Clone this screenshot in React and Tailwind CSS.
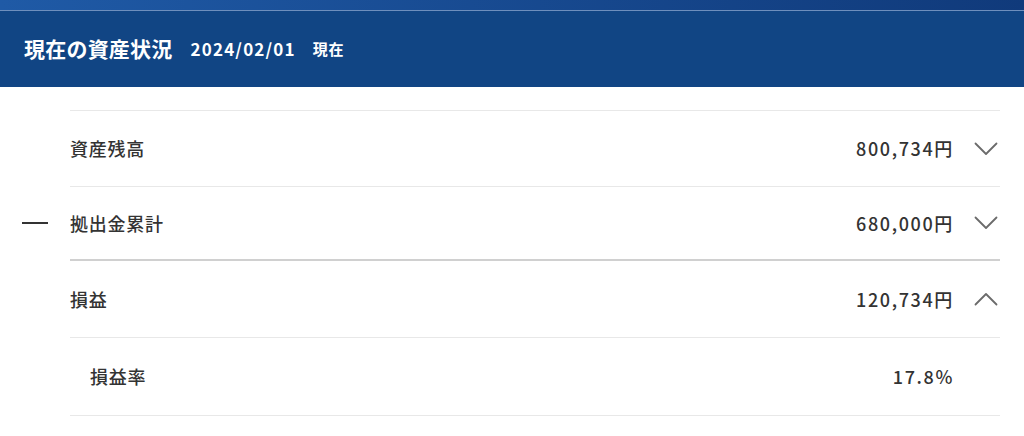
import React from 'react';

const font = { fontFamily: '"Noto Sans CJK JP", "Noto Sans", sans-serif' };

function Chevron({ up }) {
  return (
    <svg width="24" height="14" viewBox="0 0 24 14" fill="none" className="shrink-0">
      <path
        d={up ? 'M1.5 12.5 L12 2 L22.5 12.5' : 'M1.5 1.5 L12 12 L22.5 1.5'}
        stroke="#6b6b6b"
        strokeWidth="1.8"
        strokeLinecap="round"
        strokeLinejoin="round"
      />
    </svg>
  );
}

function Row({ label, value, chevron, indent, dash, height, border }) {
  return (
    <div className="flex">
      {/* left gutter */}
      <div className="w-[70px] shrink-0 flex items-center">
        {dash && <div className="ml-[22px] w-[26px] h-[2px] bg-[#333]" />}
      </div>
      <div className={`flex-1 flex items-center ${height} ${border}`}>
        <span className={`text-[18px] font-medium text-[#333] tracking-[0.04em] ${indent ? 'pl-[20px]' : ''}`}>{label}</span>
        <span className="ml-auto text-[18px] font-medium text-[#333] tracking-[0.09em] -mr-[2px]">{value}</span>
        <div className="w-[24px] ml-[22px] mr-[2px] flex justify-center">
          {chevron && <Chevron up={chevron === 'up'} />}
        </div>
      </div>
    </div>
  );
}

export default function App() {
  return (
    <div className="w-[1024px] h-[436px] bg-white overflow-hidden" style={font}>
      {/* top strip */}
      <div className="h-[10px] bg-gradient-to-r from-[#1f5aa6] to-[#103a7b]" />
      <div className="h-[1px] bg-[#6e8fbd]" />

      {/* header */}
      <header className="h-[76px] bg-[#114584] flex items-center pl-[24px] text-white">
        <h1 className="text-[21px] font-bold tracking-[0.01em]">現在の資産状況</h1>
        <span className="ml-[18px] text-[17px] font-bold tracking-[0.07em]">2024/02/01</span>
        <span className="ml-[17px] text-[15px] font-bold tracking-[0.04em]">現在</span>
      </header>

      {/* list */}
      <div className="pt-[23px] mr-[24px]">
        <Row label="資産残高" value="800,734円" chevron="down" height="h-[76px]" border="border-t border-[#e8e8e8]" />
        <Row label="拠出金累計" value="680,000円" chevron="down" dash height="h-[73px]" border="border-t border-[#e8e8e8]" />
        <Row label="損益" value="120,734円" chevron="up" height="h-[78px]" border="border-t-2 border-[#d0d0d0]" />
        <Row label="損益率" value="17.8%" indent height="h-[78px]" border="border-t border-[#e8e8e8]" />
        <div className="flex">
          <div className="w-[70px]" />
          <div className="flex-1 border-t border-[#e8e8e8]" />
        </div>
      </div>
    </div>
  );
}
